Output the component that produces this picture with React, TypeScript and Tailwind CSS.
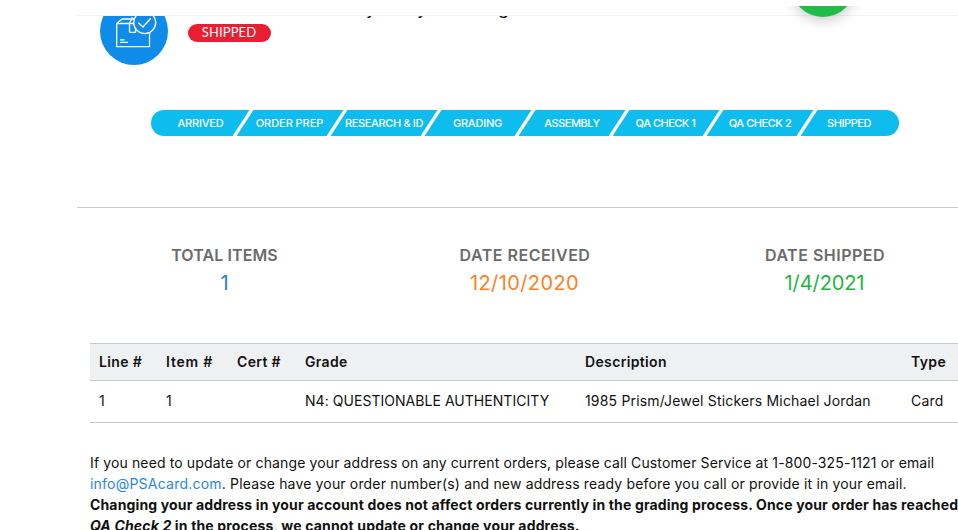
import { clsx } from "clsx";

const steps = [
  { label: "ARRIVED", className: "pl-[9px] tracking-[-0.2px]" },
  { label: "ORDER PREP", className: "pr-px tracking-[-0.05px]" },
  { label: "RESEARCH & ID", className: "tracking-[-0.35px]" },
  { label: "GRADING", className: "pr-px tracking-[-0.2px]" },
  { label: "ASSEMBLY", className: "tracking-[-0.48px]" },
  { label: "QA CHECK 1", className: "pr-px tracking-[-0.5px]" },
  { label: "QA CHECK 2", className: "tracking-[-0.45px]" },
  { label: "SHIPPED", className: "pr-[10px] tracking-[-0.45px]" },
];

const totals = [
  {
    label: "TOTAL ITEMS",
    value: "1",
    labelClass: "pr-px tracking-[0.1px]",
    valueClass: "pr-px text-[#1e7ee6]",
  },
  {
    label: "DATE RECEIVED",
    value: "12/10/2020",
    labelClass: "tracking-[0.5px]",
    valueClass: "pr-px text-[#ff7f1e] tracking-[0.4px]",
  },
  {
    label: "DATE SHIPPED",
    value: "1/4/2021",
    labelClass: "tracking-[0.5px]",
    valueClass: "pr-px text-[#22b53f] tracking-[-0.1px]",
  },
];

const columns = "grid grid-cols-[67px_71px_68px_280px_326px_1fr] pl-[9px] pb-[2px]";

function PackageIcon() {
  return (
    <svg
      className="block w-[68px] h-[68px]"
      viewBox="0 0 68 68"
      fill="none"
      stroke="white"
      strokeWidth="1.3"
    >
      <circle cx="34" cy="34" r="34" fill="#0f8ce9" stroke="none" />
      <path d="M16.7 26.5h32.8v23.1h-32.8zM16.7 26.5l5.5-4.5h16M29.5 35.3v-9l3-6M29.5 35.3h6v-9" />
      <path d="M20 42.8h4.5M20 45.3h8" />
      <circle cx="44.7" cy="25.6" r="11" fill="#0f8ce9" />
      <path d="M38.3 25.8l4.7 4.2 7.8-8.8" strokeWidth="1.5" />
    </svg>
  );
}

export default function App() {
  return (
    <main className="w-[958px] h-[530px] overflow-hidden bg-white font-['Inter',sans-serif] text-[#111]">
      <header className="relative h-[15px] ml-[77px]">
        {/* floating action button */}
        <div className="absolute left-[696px] top-[6px] w-[100px] h-[40px] overflow-hidden">
          <div className="w-16 h-16 ml-[18px] -mt-[53px] rounded-full bg-[#23bb47] shadow-[0_3px_14px_rgba(0,0,0,0.22)]"></div>
        </div>
      </header>
      <div className="ml-[77px] h-px bg-[#f2f2f2]"></div>

      <section className="flex h-[94px] pl-[100px] overflow-hidden">
        <div className="-mt-[19px]">
          <PackageIcon />
        </div>
        <div className="ml-5">
          <h1 className="h-2 -mt-[16px] mb-[16px] pl-[127px] text-[18px] leading-[16px] whitespace-nowrap">
            <span className="inline-block w-[51px] ml-[51px]">y</span>
            <span className="inline-block w-[81px]">y</span>
            <span>g</span>
          </h1>
          <div className="flex items-center justify-center w-[83px] h-[18px] pr-px rounded-full bg-[#e91e31] font-['Lato',sans-serif] text-[13px] tracking-[0.1px] text-white">
            SHIPPED
          </div>
        </div>
      </section>

      <section className="flex w-[748px] h-[26px] ml-[151px] rounded-full overflow-hidden bg-[#0ebcee]">
        {steps.map((step, i) => (
          <div key={step.label} className="flex">
            {i > 0 && <div className="w-1 h-full bg-white -skew-x-[33deg]"></div>}
            <div
              className={clsx(
                "flex items-center justify-center w-[90px] text-[11px] font-medium text-white whitespace-nowrap",
                step.className
              )}
            >
              {step.label}
            </div>
          </div>
        ))}
      </section>

      <div className="mt-[71px] ml-[77px] h-px bg-[#c8c8c8]"></div>

      <section className="flex ml-[75px] w-[900px] h-[135px] pt-[36px]">
        {totals.map((item) => (
          <div key={item.label} className="w-[300px] text-center">
            <div
              className={clsx(
                "text-[16px] leading-[22px] font-semibold text-[#6b6b6b]",
                item.labelClass
              )}
            >
              {item.label}
            </div>
            <div className={clsx("mt-1 text-[20px] leading-[26px]", item.valueClass)}>
              {item.value}
            </div>
          </div>
        ))}
      </section>

      <section className="ml-[90px] text-[14px] whitespace-nowrap">
        <div
          className={clsx(
            columns,
            "items-center h-[38px] bg-[#eff0f2] border-y border-[#c8c8c8] font-semibold tracking-[0.35px]"
          )}
        >
          <span>Line #</span>
          <span className="tracking-[0.8px]">Item #</span>
          <span>Cert #</span>
          <span>Grade</span>
          <span>Description</span>
          <span>Type</span>
        </div>
        <div className={clsx(columns, "items-center h-[42px] border-b border-[#c8c8c8]")}>
          <span>1</span>
          <span>1</span>
          <span></span>
          <span className="tracking-[0.04px]">N4: QUESTIONABLE AUTHENTICITY</span>
          <span className="tracking-[0.18px]">1985 Prism/Jewel Stickers Michael Jordan</span>
          <span className="tracking-[0.2px]">Card</span>
        </div>
      </section>

      <section className="ml-[90px] mt-[29px] text-[14px] leading-[21px] tracking-[0.16px] whitespace-nowrap">
        <p className="tracking-[0.125px]">
          If you need to update or change your address on any current orders, please call Customer Service at 1-800-325-1121 or email
        </p>
        <p>
          <a className="text-[#2b86e6] tracking-[0.22px]">info@PSAcard.com</a>. Please have your order number(s) and new address ready before you call or provide it in your email.
        </p>
        <p className="font-bold tracking-[0.15px]">
          Changing your address in your account does not affect orders currently in the grading process. Once your order has reached
        </p>
        <p className="font-bold">
          <em>QA Check 2</em> in the process, we cannot update or change your address.
        </p>
      </section>
    </main>
  );
}
